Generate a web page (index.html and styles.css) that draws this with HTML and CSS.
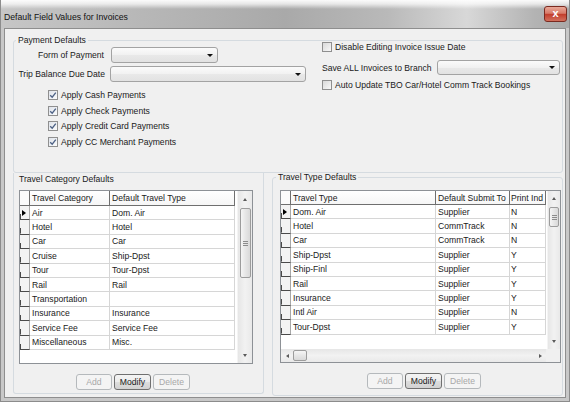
FILE: index.html
```html
<!DOCTYPE html>
<html>
<head>
<meta charset="utf-8">
<link rel="stylesheet" href="styles.css">
</head>
<body>
<div class="window">
  <div class="titlebar">
    <span class="title">Default Field Values for Invoices</span>
    <span class="close">x</span>
  </div>
  <div class="frame">
    <div class="client">
      <fieldset class="pay">
        <legend>Payment Defaults</legend>
        <div class="pay-cols">
          <div class="pay-left">
            <div class="frow r1"><span class="flabel">Form of Payment</span><div class="combo c1"><span class="arrow"></span></div></div>
            <div class="frow r2"><span class="flabel">Trip Balance Due Date</span><div class="combo c2"><span class="arrow"></span></div></div>
            <ul class="checks">
              <li><span class="cb on"><svg viewBox="0 0 8 8" width="8" height="8"><path d="M1.2 4.2 L3.2 6.2 L6.8 1.6" stroke="#4d6185" stroke-width="1.3" fill="none"/></svg></span>Apply Cash Payments</li>
              <li><span class="cb on"><svg viewBox="0 0 8 8" width="8" height="8"><path d="M1.2 4.2 L3.2 6.2 L6.8 1.6" stroke="#4d6185" stroke-width="1.3" fill="none"/></svg></span>Apply Check Payments</li>
              <li><span class="cb on"><svg viewBox="0 0 8 8" width="8" height="8"><path d="M1.2 4.2 L3.2 6.2 L6.8 1.6" stroke="#4d6185" stroke-width="1.3" fill="none"/></svg></span>Apply Credit Card Payments</li>
              <li><span class="cb on"><svg viewBox="0 0 8 8" width="8" height="8"><path d="M1.2 4.2 L3.2 6.2 L6.8 1.6" stroke="#4d6185" stroke-width="1.3" fill="none"/></svg></span>Apply CC Merchant Payments</li>
            </ul>
          </div>
          <div class="pay-right">
            <div class="crow first"><span class="cb"></span>Disable Editing Invoice Issue Date</div>
            <div class="frow r3"><span class="blabel">Save ALL Invoices to Branch</span><div class="combo c3"><span class="arrow"></span></div></div>
            <div class="crow third"><span class="cb"></span>Auto Update TBO Car/Hotel Comm Track Bookings</div>
          </div>
        </div>
      </fieldset>

      <div class="bottom">
        <div class="cat">
          <div class="cat-title">Travel Category Defaults</div>
          <div class="grid gl">
            <div class="gdata">
              <div class="ghead">
                <div class="rh hcorner"></div>
                <div class="hc w80">Travel Category</div>
                <div class="hc w125">Default Travel Type</div>
              </div>
              <div class="grow"><div class="rh sel"><span class="ptr"></span></div><div class="c w80">Air</div><div class="c w125">Dom. Air</div></div>
              <div class="grow"><div class="rh"></div><div class="c w80">Hotel</div><div class="c w125">Hotel</div></div>
              <div class="grow"><div class="rh"></div><div class="c w80">Car</div><div class="c w125">Car</div></div>
              <div class="grow"><div class="rh"></div><div class="c w80">Cruise</div><div class="c w125">Ship-Dpst</div></div>
              <div class="grow"><div class="rh"></div><div class="c w80">Tour</div><div class="c w125">Tour-Dpst</div></div>
              <div class="grow"><div class="rh"></div><div class="c w80">Rail</div><div class="c w125">Rail</div></div>
              <div class="grow"><div class="rh"></div><div class="c w80">Transportation</div><div class="c w125"></div></div>
              <div class="grow"><div class="rh"></div><div class="c w80">Insurance</div><div class="c w125">Insurance</div></div>
              <div class="grow"><div class="rh"></div><div class="c w80">Service Fee</div><div class="c w125">Service Fee</div></div>
              <div class="grow"><div class="rh"></div><div class="c w80">Miscellaneous</div><div class="c w125">Misc.</div></div>
            </div>
            <div class="vscroll vs-left">
              <div class="arr"><span class="tri-up"></span></div>
              <div class="vthumb t-left"><span class="grip"></span></div>
              <div class="track"></div>
              <div class="arr"><span class="tri-down"></span></div>
            </div>
          </div>
          <div class="btns b-left">
            <div class="btn dis add">Add</div>
            <div class="btn">Modify</div>
            <div class="btn dis">Delete</div>
          </div>
        </div>

        <fieldset class="types">
          <legend>Travel Type Defaults</legend>
          <div class="grid gr">
            <div class="gmain">
              <div class="gbody">
                <div class="gdata">
                  <div class="ghead hr">
                    <div class="rh hcorner"></div>
                    <div class="hc w147">Travel Type</div>
                    <div class="hc w74">Default Submit To</div>
                    <div class="hc w34">Print Ind</div>
                  </div>
                  <div class="grow"><div class="rh sel"><span class="ptr"></span></div><div class="c w147">Dom. Air</div><div class="c w74">Supplier</div><div class="c w34">N</div></div>
                  <div class="grow"><div class="rh"></div><div class="c w147">Hotel</div><div class="c w74">CommTrack</div><div class="c w34">N</div></div>
                  <div class="grow"><div class="rh"></div><div class="c w147">Car</div><div class="c w74">CommTrack</div><div class="c w34">N</div></div>
                  <div class="grow"><div class="rh"></div><div class="c w147">Ship-Dpst</div><div class="c w74">Supplier</div><div class="c w34">Y</div></div>
                  <div class="grow"><div class="rh"></div><div class="c w147">Ship-Finl</div><div class="c w74">Supplier</div><div class="c w34">Y</div></div>
                  <div class="grow"><div class="rh"></div><div class="c w147">Rail</div><div class="c w74">Supplier</div><div class="c w34">Y</div></div>
                  <div class="grow"><div class="rh"></div><div class="c w147">Insurance</div><div class="c w74">Supplier</div><div class="c w34">Y</div></div>
                  <div class="grow"><div class="rh"></div><div class="c w147">Intl Air</div><div class="c w74">Supplier</div><div class="c w34">N</div></div>
                  <div class="grow"><div class="rh"></div><div class="c w147">Tour-Dpst</div><div class="c w74">Supplier</div><div class="c w34">Y</div></div>
                </div>
                <div class="vscroll vs-right">
                  <div class="arr"><span class="tri-up"></span></div>
                  <div class="vthumb t-right"><span class="grip"></span></div>
                  <div class="track"></div>
                  <div class="arr"><span class="tri-down"></span></div>
                </div>
              </div>
              <div class="hbar">
                <div class="hscroll">
                  <div class="harr"><span class="tri-left"></span></div>
                  <div class="hthumb"></div>
                  <div class="track"></div>
                  <div class="harr"><span class="tri-right"></span></div>
                </div>
                <div class="corner"></div>
              </div>
            </div>
          </div>
          <div class="btns b-right">
            <div class="btn dis add">Add</div>
            <div class="btn">Modify</div>
            <div class="btn dis">Delete</div>
          </div>
        </fieldset>
      </div>
    </div>
  </div>
</div>
</body>
</html>
```

FILE: styles.css
```css
* { box-sizing: border-box; }
html, body { margin: 0; padding: 0; }
body {
  width: 570px;
  height: 402px;
  overflow: hidden;
  font-family: "Liberation Sans", Arial, sans-serif;
  font-size: 8.6px;
  color: #1a1a1a;
  background: #fff;
}
.window { width: 570px; height: 402px; display: flex; flex-direction: column; }

/* title bar */
.titlebar {
  height: 28px;
  flex: none;
  display: flex;
  justify-content: space-between;
  align-items: flex-start;
  border-left: 1px solid #8c8c8c;
  border-right: 1px solid #8c8c8c;
  background:
    linear-gradient(to bottom, rgba(255,255,255,0.95) 0, rgba(255,255,255,0.7) 4px, rgba(255,255,255,0) 9px),
    linear-gradient(90deg, #c6c6c6 0%, #b7b7b7 25%, #a9a9a9 50%, #b9b9b9 68%, #d8d8d8 82%, #b3b3b3 94%, #a9a9a9 100%);
}
.title { padding: 12px 0 0 3px; line-height: 11px; font-size: 8.7px; color: #111; }
.close {
  width: 23px;
  height: 16px;
  margin: 6px 2px 0 0;
  border: 1px solid #7a2a20;
  border-radius: 3px;
  background: linear-gradient(#e9a898, #d77a68 45%, #c23e2c 52%, #d3705d);
  color: #fff;
  font-weight: bold;
  font-size: 11px;
  line-height: 13px;
  text-align: center;
}

/* frame / client */
.frame {
  flex: 1;
  display: flex;
  padding: 0 3px 3px;
  background: #c8c8c8;
  border-left: 1px solid #8c8c8c;
  border-right: 1px solid #8c8c8c;
  border-bottom: 1px solid #8c8c8c;
}
.client {
  flex: 1;
  display: flex;
  flex-direction: column;
  background: #f0f0f0;
  border: 1px solid #8e8e8e;
}

/* group boxes */
fieldset { margin: 0; min-width: 0; }
legend { padding: 0 2px; }
.pay {
  margin: 5.5px 2px 0 8px;
  height: 138px;
  border: 1px solid #d5dbe0;
  border-radius: 3px;
  padding: 1.5px 2px 0 2px;
}
.pay legend { line-height: 11px; }
.pay-cols { display: flex; }
.pay-left { width: 306px; flex: none; }
.pay-right { flex: 1; display: flex; flex-direction: column; }

.frow { display: flex; align-items: center; }
.r1 { height: 16px; }
.r2 { height: 16px; margin-top: 3px; }
.flabel { width: 90px; text-align: right; padding-right: 1px; }
.r1 .flabel { padding-right: 2px; }
.combo {
  height: 16px;
  margin-left: 4px;
  border: 1px solid #a3a3a3;
  border-radius: 3px;
  background: linear-gradient(#fbfbfb, #f1f1f1 50%, #e9e9e9 50%, #e2e2e2);
  display: flex;
  align-items: center;
  justify-content: flex-end;
  padding-right: 4px;
}
.c1 { width: 107px; margin-left: 5px; }
.c2 { width: 196px; }
.arrow {
  width: 0; height: 0;
  border-left: 3px solid transparent;
  border-right: 3px solid transparent;
  border-top: 3px solid #111;
}
.checks { list-style: none; margin: 5.2px 0 0 32px; padding: 0; }
.checks li { height: 15.6px; display: flex; align-items: center; }
.cb {
  width: 10px; height: 10px;
  flex: none;
  border: 1px solid #8f8f8f;
  background: linear-gradient(135deg, #d9d9d9, #f8f8f8);
  margin-right: 3px;
  display: inline-flex;
  align-items: center;
  justify-content: center;
}
.cb.on { background: linear-gradient(135deg, #dfe3ea, #fafbfc); }
.cb svg { display: block; }

.crow { height: 13px; display: flex; align-items: center; }
.crow .cb { margin-right: 3px; }
.first { margin-top: -6.5px; }
.r3 { height: 15px; margin-top: 6.5px; }
.blabel { width: 115px; }
.c3 { width: 123px; height: 15px; margin-left: 0; }
.third { margin-top: 3.5px; }

/* bottom area */
.bottom {
  display: flex;
  align-items: flex-start;
  gap: 8px;
  margin: 0 2px 0 8px;
}
.cat {
  width: 251px;
  height: 221px;
  border: 1px solid #d5dbe0;
  border-top: none;
  border-radius: 0 0 3px 3px;
  padding: 1px 0 0 5px;
}
.cat-title { line-height: 11px; }
.types {
  width: 291px;
  height: 223px;
  border: 1px solid #d5dbe0;
  border-radius: 3px;
  padding: 8.5px 0 0 3px;
}
.types legend { line-height: 9px; }

/* grids */
.grid { display: flex; border: 1px solid #8d9196; background: #fff; }
.gl { width: 234px; height: 174px; margin-top: 5.5px; }
.gr { width: 281px; height: 173px; margin-left: 4px; }
.gdata { flex: 1; display: flex; flex-direction: column; }
.gmain { flex: 1; display: flex; flex-direction: column; }
.gbody { flex: 1; display: flex; }
.ghead { display: flex; height: 15px; flex: none; }
.ghead.hr { height: 14px; }
.grow { display: flex; height: 14.4px; flex: none; }
.hc {
  flex: none;
  height: 100%;
  border-right: 1px solid #6f6f6f;
  border-bottom: 1px solid #6f6f6f;
  background: linear-gradient(#ffffff, #f6f6f6);
  padding-left: 2px;
  display: flex;
  align-items: center;
  white-space: nowrap;
  overflow: hidden;
}
.c {
  flex: none;
  height: 100%;
  border-right: 1px solid #d6d6d6;
  border-bottom: 1px solid #d6d6d6;
  padding-left: 2px;
  display: flex;
  align-items: center;
  white-space: nowrap;
  overflow: hidden;
}
.w80 { width: 80px; }
.w125 { width: 125px; }
.w147 { width: 145px; }
.w74 { width: 74px; }
.w34 { width: 36px; padding-left: 1px; }
.rh {
  width: 10px;
  flex: none;
  height: 100%;
  background-color: #f3f3f3;
  background-image: linear-gradient(#4a4a4a, #4a4a4a);
  background-size: 1px 40%;
  background-position: left bottom;
  background-repeat: no-repeat;
  border-right: 1px solid #a8a8a8;
  border-bottom: 1px solid #4a4a4a;
  display: flex;
  align-items: center;
  padding-left: 2px;
}
.rh.hcorner {
  background-image: none;
  background-color: #fbfbfb;
  border-bottom: 1px solid #6f6f6f;
  border-right: 1px solid #6f6f6f;
}
.ptr {
  width: 0; height: 0;
  border-top: 3.5px solid transparent;
  border-bottom: 3.5px solid transparent;
  border-left: 4px solid #000;
}

/* scrollbars */
.vscroll {
  flex: none;
  display: flex;
  flex-direction: column;
  align-items: center;
  background: linear-gradient(90deg, #e6e6e6, #f2f2f2 50%, #e9e9e9);
  border-left: 1px solid #f4f4f4;
}
.vs-left { width: 15px; margin-left: 2px; }
.vs-right { width: 13px; margin-left: 1px; }
.arr { height: 15px; width: 100%; flex: none; display: flex; align-items: center; justify-content: center; }
.vs-left .arr:first-child { height: 16px; }
.track { flex: 1; }
.tri-up { width: 0; height: 0; border-left: 2.5px solid transparent; border-right: 2.5px solid transparent; border-bottom: 3px solid #5a5a5a; }
.tri-down { width: 0; height: 0; border-left: 2.5px solid transparent; border-right: 2.5px solid transparent; border-top: 3px solid #5a5a5a; }
.tri-left { width: 0; height: 0; border-top: 2.5px solid transparent; border-bottom: 2.5px solid transparent; border-right: 3px solid #5a5a5a; }
.tri-right { width: 0; height: 0; border-top: 2.5px solid transparent; border-bottom: 2.5px solid transparent; border-left: 3px solid #5a5a5a; }
.vthumb {
  flex: none;
  width: 11px;
  margin-top: 1px;
  border: 1px solid #9c9c9c;
  border-radius: 2px;
  background: linear-gradient(90deg, #f5f5f5, #e6e6e6 50%, #d9d9d9);
  display: flex;
  align-items: center;
  justify-content: center;
}
.t-left { height: 70px; }
.t-right { height: 20px; width: 10px; }
.grip {
  width: 5px;
  height: 5px;
  background: repeating-linear-gradient(#8c8c8c 0 1px, transparent 1px 2px);
}
.hbar { height: 13px; flex: none; display: flex; }
.hscroll {
  flex: 1;
  display: flex;
  align-items: center;
  background: linear-gradient(#e6e6e6, #f2f2f2 50%, #e9e9e9);
}
.corner { width: 14px; flex: none; background: #f0f0f0; }
.harr { width: 12px; height: 100%; flex: none; display: flex; align-items: center; justify-content: center; }
.hthumb {
  width: 14px;
  height: 11px;
  flex: none;
  border: 1px solid #9c9c9c;
  border-radius: 2px;
  background: linear-gradient(#f5f5f5, #e6e6e6 50%, #d9d9d9);
}

/* buttons */
.btns { display: flex; gap: 2px; margin-top: 10px; }
.b-left { margin-left: 57px; }
.b-right { margin-left: 91px; }
.btn {
  width: 37px;
  height: 16px;
  border: 1px solid #707070;
  border-radius: 3px;
  background: linear-gradient(#f4f4f4, #ececec 50%, #dedede 50%, #d2d2d2);
  display: flex;
  align-items: center;
  justify-content: center;
}
.btn.add { width: 36px; }
.btn.dis {
  border-color: #b5b9bc;
  background: #f4f4f4;
  color: #a8a8a8;
}
```
